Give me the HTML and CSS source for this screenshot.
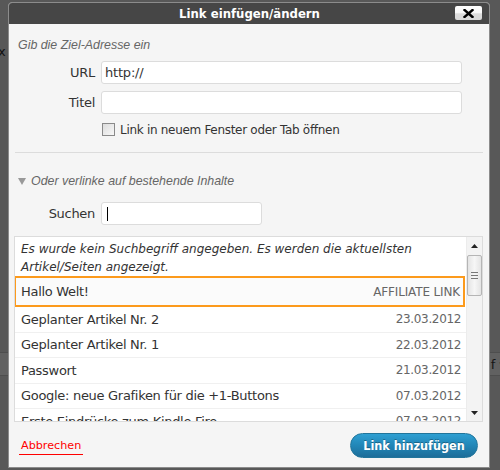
FILE: index.html
```html
<!DOCTYPE html>
<html lang="de">
<head>
<meta charset="utf-8">
<title>Link einfügen/ändern</title>
<link rel="stylesheet" href="styles.css">
</head>
<body>
<div class="page">
  <div class="page-x">x</div>
  <div class="page-band"><span class="page-band-text">f ▾</span></div>
</div>
<div class="dialog">
  <div class="titlebar">
    <span class="title">Link einfügen/ändern</span>
    <span class="close"><svg width="11" height="9" viewBox="0 0 11 9"><path d="M1.5 1 L9.5 8 M9.5 1 L1.5 8" stroke="#000" stroke-width="2.4" stroke-linecap="square"/></svg></span>
  </div>
  <div class="body">
    <p class="hint">Gib die Ziel-Adresse ein</p>
    <div class="field"><span class="label">URL</span><div class="input">http://</div></div>
    <div class="field field-titel"><span class="label">Titel</span><div class="input"></div></div>
    <div class="check"><span class="checkbox"></span><span>Link in neuem Fenster oder Tab öffnen</span></div>
    <div class="sep"></div>
    <div class="toggle"><svg class="tri" width="8" height="7" viewBox="0 0 8 7"><path d="M0 0 H8 L4 7 Z" fill="#999"/></svg><span>Oder verlinke auf bestehende Inhalte</span></div>
    <div class="field field-search"><span class="label">Suchen</span><div class="input input-short"><span class="caret"></span></div></div>
    <div class="results">
      <div class="list">
        <div class="notice">Es wurde kein Suchbegriff angegeben. Es werden die aktuellsten Artikel/Seiten angezeigt.</div>
        <div class="row row-sel"><span class="row-title">Hallo Welt!</span><span class="row-meta">AFFILIATE LINK</span></div>
        <div class="row"><span class="row-title">Geplanter Artikel Nr. 2</span><span class="row-meta">23.03.2012</span></div>
        <div class="row"><span class="row-title">Geplanter Artikel Nr. 1</span><span class="row-meta">22.03.2012</span></div>
        <div class="row"><span class="row-title">Passwort</span><span class="row-meta">21.03.2012</span></div>
        <div class="row"><span class="row-title">Google: neue Grafiken für die +1-Buttons</span><span class="row-meta">07.03.2012</span></div>
        <div class="row"><span class="row-title">Erste Eindrücke zum Kindle Fire</span><span class="row-meta">07.03.2012</span></div>
      </div>
      <div class="scrollbar">
        <div class="sb-arrow"><svg width="7" height="4" viewBox="0 0 7 4"><path d="M0 4 L3.5 0 L7 4 Z" fill="#222"/></svg></div>
        <div class="sb-thumb"><span class="grip"></span><span class="grip"></span><span class="grip"></span></div>
        <div class="sb-track"></div>
        <div class="sb-arrow"><svg width="7" height="4" viewBox="0 0 7 4"><path d="M0 0 L7 0 L3.5 4 Z" fill="#222"/></svg></div>
      </div>
    </div>
    <div class="footer">
      <a class="cancel" href="#">Abbrechen</a>
      <span class="submit">Link hinzufügen</span>
    </div>
  </div>
</div>
</body>
</html>
```
FILE: styles.css
```css
html, body {
  margin: 0;
  padding: 0;
}
body {
  width: 500px;
  height: 470px;
  overflow: hidden;
  background: #585858;
  font-family: "DejaVu Sans", Verdana, sans-serif;
  position: relative;
}
.page {
  padding-top: 44px;
}
.page-x {
  font-size: 13px;
  line-height: 16px;
  color: #111;
  margin-left: -2px;
}
.page-band {
  margin-top: 292px;
  height: 22px;
  border-top: 1px solid #4e4e4e;
  border-bottom: 1px solid #4e4e4e;
  background: #616161;
  display: flex;
  justify-content: flex-end;
  align-items: center;
}
.page-band-text {
  font-size: 13px;
  color: #151515;
  margin-right: -6px;
}

.dialog {
  position: absolute;
  left: 8px;
  top: 2px;
  width: 480px;
  height: 464px;
  border: 1px solid #8c8c8c;
  border-radius: 4px 4px 0 0;
  background: #f5f5f5;
  display: flex;
  flex-direction: column;
  overflow: hidden;
}
.titlebar {
  position: relative;
  height: 21px;
  background: #464646;
  display: flex;
  justify-content: center;
  align-items: center;
  flex-shrink: 0;
}
.title {
  font-family: "DejaVu Sans Condensed", "DejaVu Sans", sans-serif;
  font-stretch: condensed;
  font-weight: bold;
  font-size: 13px;
  color: #fff;
  padding-left: 1px;
}
.close {
  position: absolute;
  right: 7px;
  top: 3px;
  width: 27px;
  height: 14px;
  border-radius: 2px;
  background: linear-gradient(#ffffff 0%, #f7f7f7 50%, #dcdcdc 55%, #d9d9d9 100%);
  display: flex;
  align-items: center;
  justify-content: center;
}

.body {
  flex: 1;
  display: flex;
  flex-direction: column;
}
.hint {
  margin: 13px 0 0 9px;
  font-family: "Liberation Sans", Arial, sans-serif;
  font-style: italic;
  font-size: 12.4px;
  line-height: 16px;
  color: #666;
}
.field {
  display: flex;
  align-items: center;
  margin-top: 8px;
}
.field-titel {
  margin-top: 7px;
}
.label {
  width: 86px;
  text-align: right;
  font-size: 13px;
  letter-spacing: -0.3px;
  color: #333;
  margin-right: 6px;
}
.input {
  width: 355px;
  height: 21px;
  border: 1px solid #dcdcdc;
  border-radius: 3px;
  background: #fff;
  font-size: 13px;
  line-height: 21px;
  padding: 0 1px 0 3px;
  color: #333;
  letter-spacing: -0.2px;
  display: flex;
  align-items: center;
}
.check {
  display: flex;
  align-items: center;
  margin: 9px 0 0 93px;
  font-size: 12px;
  letter-spacing: -0.3px;
  color: #333;
  height: 13px;
}
.checkbox {
  width: 11px;
  height: 11px;
  border: 1px solid #8a8a8a;
  background: linear-gradient(135deg, #dcdcdc, #f8f8f8);
  margin-right: 5px;
  flex-shrink: 0;
}
.sep {
  height: 1px;
  background: #dcdcdc;
  margin: 16px 6px 0 6px;
}
.toggle {
  display: flex;
  align-items: center;
  margin: 20px 0 0 9px;
  height: 16px;
  font-family: "Liberation Sans", Arial, sans-serif;
  font-style: italic;
  font-size: 12.4px;
  color: #666;
}
.tri {
  margin: 1px 5px 0 0;
}
.field-search {
  margin-top: 13px;
}
.input-short {
  width: 154px;
  height: 21px;
  padding: 0 0 0 5px;
}
.caret {
  width: 1px;
  height: 14px;
  background: #000;
}

.results {
  margin: 11px 6px 0 5px;
  height: 184px;
  border: 1px solid #dcdcdc;
  background: #fff;
  display: flex;
}
.list {
  flex: 1;
  overflow: hidden;
}
.notice {
  padding: 3px 6px 0 6px;
  font-style: italic;
  font-size: 12px;
  line-height: 18px;
  color: #333;
}
.row {
  height: 24.5px;
  border-bottom: 1px solid #f0f0f0;
  display: flex;
  align-items: center;
  justify-content: space-between;
  padding: 0 5px 0 6px;
}
.row-title {
  font-size: 13px;
  letter-spacing: -0.3px;
  color: #333;
}
.row-meta {
  font-size: 12px;
  letter-spacing: -0.35px;
  color: #666;
}
.row-sel {
  height: 27px;
  border: 2px solid #fc9a1c;
  margin: 0 1px 0 -1px;
  padding: 0 3px 0 5px;
  background: #fbfbfb;
}
.row-sel .row-meta {
  letter-spacing: -0.15px;
}

.scrollbar {
  width: 15px;
  border-left: 1px solid #ececec;
  background: #f3f3f3;
  display: flex;
  flex-direction: column;
  align-items: center;
}
.sb-arrow {
  height: 17px;
  display: flex;
  align-items: center;
  justify-content: center;
}
.sb-thumb {
  width: 13px;
  height: 39px;
  border: 1px solid #b5b5b5;
  border-radius: 2px;
  background: linear-gradient(90deg, #e4e4e4, #f6f6f6 50%, #e4e4e4);
  display: flex;
  flex-direction: column;
  align-items: center;
  justify-content: center;
  gap: 2px;
  margin-top: 1px;
}
.grip {
  width: 7px;
  height: 1px;
  background: #777;
}
.sb-track {
  flex: 1;
}

.footer {
  display: flex;
  justify-content: space-between;
  align-items: center;
  margin: 11px 11px 0 10px;
}
.cancel {
  font-size: 11.2px;
  color: #f00;
  text-decoration: none;
  padding: 0 2px 2px 2px;
  border-bottom: 1px solid #f00;
  margin-top: 2px;
}
.submit {
  width: 126px;
  height: 23px;
  border: 1px solid #21759b;
  border-radius: 13px;
  background: linear-gradient(#2e9fd2, #2184b4 55%, #1d6d99);
  color: #fff;
  font-family: "DejaVu Sans Condensed", "DejaVu Sans", sans-serif;
  font-stretch: condensed;
  font-weight: bold;
  font-size: 12.5px;
  text-shadow: 0 -1px 0 rgba(0, 0, 0, 0.3);
  display: flex;
  align-items: center;
  justify-content: center;
}
```
